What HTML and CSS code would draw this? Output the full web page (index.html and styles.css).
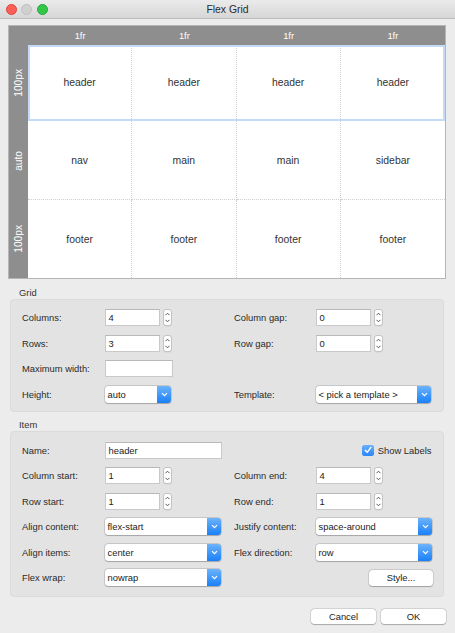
FILE: index.html
```html
<!DOCTYPE html>
<html>
<head>
<meta charset="utf-8">
<title>Flex Grid</title>
<link rel="stylesheet" href="styles.css">
</head>
<body>
<div class="window">
  <div class="titlebar">
    <div class="lights">
      <span class="light red"></span>
      <span class="light gray"></span>
      <span class="light green"></span>
    </div>
    <div class="title">Flex Grid</div>
    <div></div>
  </div>

  <div class="gridview">
    <div class="corner"></div>
    <div class="colhead">1fr</div>
    <div class="colhead">1fr</div>
    <div class="colhead">1fr</div>
    <div class="colhead">1fr</div>

    <div class="rowhead r1"><span>100px</span></div>
    <div class="cell y1 x1">header</div>
    <div class="cell y1 x2">header</div>
    <div class="cell y1 x3">header</div>
    <div class="cell y1 x4 lastc">header</div>

    <div class="rowhead r2"><span>auto</span></div>
    <div class="cell y2 x1">nav</div>
    <div class="cell y2 x2">main</div>
    <div class="cell y2 x3">main</div>
    <div class="cell y2 x4 lastc">sidebar</div>

    <div class="rowhead r3"><span>100px</span></div>
    <div class="cell y3 x1 lastr">footer</div>
    <div class="cell y3 x2 lastr">footer</div>
    <div class="cell y3 x3 lastr">footer</div>
    <div class="cell y3 x4 lastc lastr">footer</div>

    <div class="sel"></div>
  </div>

  <div class="sectlabel first">Grid</div>
  <div class="box gridbox">
    <div class="lbl">Columns:</div>
    <div class="field"><span class="input">4</span><span class="stepper"><svg width="7" height="15" viewBox="0 0 7 15"><path d="M1.5 5.2 L3.5 3.2 L5.5 5.2" fill="none" stroke="#555" stroke-width="1"/><path d="M1.5 9.8 L3.5 11.8 L5.5 9.8" fill="none" stroke="#555" stroke-width="1"/></svg></span></div>
    <div class="lbl">Column gap:</div>
    <div class="field"><span class="input">0</span><span class="stepper"><svg width="7" height="15" viewBox="0 0 7 15"><path d="M1.5 5.2 L3.5 3.2 L5.5 5.2" fill="none" stroke="#555" stroke-width="1"/><path d="M1.5 9.8 L3.5 11.8 L5.5 9.8" fill="none" stroke="#555" stroke-width="1"/></svg></span></div>

    <div class="lbl">Rows:</div>
    <div class="field"><span class="input">3</span><span class="stepper"><svg width="7" height="15" viewBox="0 0 7 15"><path d="M1.5 5.2 L3.5 3.2 L5.5 5.2" fill="none" stroke="#555" stroke-width="1"/><path d="M1.5 9.8 L3.5 11.8 L5.5 9.8" fill="none" stroke="#555" stroke-width="1"/></svg></span></div>
    <div class="lbl">Row gap:</div>
    <div class="field"><span class="input">0</span><span class="stepper"><svg width="7" height="15" viewBox="0 0 7 15"><path d="M1.5 5.2 L3.5 3.2 L5.5 5.2" fill="none" stroke="#555" stroke-width="1"/><path d="M1.5 9.8 L3.5 11.8 L5.5 9.8" fill="none" stroke="#555" stroke-width="1"/></svg></span></div>

    <div class="lbl">Maximum width:</div>
    <div class="field"><span class="input wide68"></span></div>
    <div></div>
    <div></div>

    <div class="lbl">Height:</div>
    <div class="popup w66"><span class="val">auto</span><span class="arrow"><svg width="7" height="5" viewBox="0 0 7 5"><path d="M1 1.2 L3.5 3.7 L6 1.2" fill="none" stroke="#fff" stroke-width="1.2"/></svg></span></div>
    <div class="lbl">Template:</div>
    <div class="popup w115"><span class="val">&lt; pick a template &gt;</span><span class="arrow"><svg width="7" height="5" viewBox="0 0 7 5"><path d="M1 1.2 L3.5 3.7 L6 1.2" fill="none" stroke="#fff" stroke-width="1.2"/></svg></span></div>
  </div>

  <div class="sectlabel">Item</div>
  <div class="box itembox">
    <div class="lbl">Name:</div>
    <div class="field"><span class="input wide117">header</span></div>
    <div class="check"><span class="cbox"><svg width="10" height="10" viewBox="0 0 10 10"><path d="M2.2 5.2 L4.2 7.3 L7.9 2.4" fill="none" stroke="#fff" stroke-width="1.4" stroke-linecap="round" stroke-linejoin="round"/></svg></span><span>Show Labels</span></div>

    <div class="lbl">Column start:</div>
    <div class="field"><span class="input">1</span><span class="stepper"><svg width="7" height="15" viewBox="0 0 7 15"><path d="M1.5 5.2 L3.5 3.2 L5.5 5.2" fill="none" stroke="#555" stroke-width="1"/><path d="M1.5 9.8 L3.5 11.8 L5.5 9.8" fill="none" stroke="#555" stroke-width="1"/></svg></span></div>
    <div class="lbl">Column end:</div>
    <div class="field"><span class="input">4</span><span class="stepper"><svg width="7" height="15" viewBox="0 0 7 15"><path d="M1.5 5.2 L3.5 3.2 L5.5 5.2" fill="none" stroke="#555" stroke-width="1"/><path d="M1.5 9.8 L3.5 11.8 L5.5 9.8" fill="none" stroke="#555" stroke-width="1"/></svg></span></div>

    <div class="lbl">Row start:</div>
    <div class="field"><span class="input">1</span><span class="stepper"><svg width="7" height="15" viewBox="0 0 7 15"><path d="M1.5 5.2 L3.5 3.2 L5.5 5.2" fill="none" stroke="#555" stroke-width="1"/><path d="M1.5 9.8 L3.5 11.8 L5.5 9.8" fill="none" stroke="#555" stroke-width="1"/></svg></span></div>
    <div class="lbl">Row end:</div>
    <div class="field"><span class="input">1</span><span class="stepper"><svg width="7" height="15" viewBox="0 0 7 15"><path d="M1.5 5.2 L3.5 3.2 L5.5 5.2" fill="none" stroke="#555" stroke-width="1"/><path d="M1.5 9.8 L3.5 11.8 L5.5 9.8" fill="none" stroke="#555" stroke-width="1"/></svg></span></div>

    <div class="lbl">Align content:</div>
    <div class="popup w116"><span class="val">flex-start</span><span class="arrow"><svg width="7" height="5" viewBox="0 0 7 5"><path d="M1 1.2 L3.5 3.7 L6 1.2" fill="none" stroke="#fff" stroke-width="1.2"/></svg></span></div>
    <div class="lbl">Justify content:</div>
    <div class="popup w116"><span class="val">space-around</span><span class="arrow"><svg width="7" height="5" viewBox="0 0 7 5"><path d="M1 1.2 L3.5 3.7 L6 1.2" fill="none" stroke="#fff" stroke-width="1.2"/></svg></span></div>

    <div class="lbl">Align items:</div>
    <div class="popup w116"><span class="val">center</span><span class="arrow"><svg width="7" height="5" viewBox="0 0 7 5"><path d="M1 1.2 L3.5 3.7 L6 1.2" fill="none" stroke="#fff" stroke-width="1.2"/></svg></span></div>
    <div class="lbl">Flex direction:</div>
    <div class="popup w116"><span class="val">row</span><span class="arrow"><svg width="7" height="5" viewBox="0 0 7 5"><path d="M1 1.2 L3.5 3.7 L6 1.2" fill="none" stroke="#fff" stroke-width="1.2"/></svg></span></div>

    <div class="lbl">Flex wrap:</div>
    <div class="popup w116"><span class="val">nowrap</span><span class="arrow"><svg width="7" height="5" viewBox="0 0 7 5"><path d="M1 1.2 L3.5 3.7 L6 1.2" fill="none" stroke="#fff" stroke-width="1.2"/></svg></span></div>
    <div></div>
    <div class="btn stylebtn">Style...</div>
  </div>

  <div class="actions">
    <div class="btn">Cancel</div>
    <div class="btn">OK</div>
  </div>
</div>
</body>
</html>
```

FILE: styles.css
```css
* { box-sizing: border-box; }

body {
  margin: 0;
  background: #ececec;
  font-family: "Liberation Sans", Arial, sans-serif;
  font-size: 9.4px;
  color: #2a2a2a;
}

.window {
  width: 455px;
  height: 633px;
  overflow: hidden;
}

.titlebar {
  height: 19px;
  background: linear-gradient(#ebebeb, #d6d6d6);
  border-bottom: 1px solid #bdbdbd;
  display: grid;
  grid-template-columns: 1fr auto 1fr;
  align-items: center;
}

.lights {
  display: flex;
  gap: 4.5px;
  padding-left: 5.5px;
}

.light {
  width: 11px;
  height: 11px;
  border-radius: 50%;
  display: block;
}
.light.red { background: #fc5f57; border: 0.5px solid #de443d; }
.light.gray { background: #d0d0d0; border: 0.5px solid #c0c0c0; }
.light.green { background: #33c748; border: 0.5px solid #21a936; }

.title {
  font-size: 10.4px;
  color: #2a2a2a;
}

.gridview {
  margin: 6px 0 0 8px;
  width: 438px;
  height: 254px;
  border: 1px solid #b5b5b5;
  background: #fff;
  display: grid;
  grid-template-columns: 19px repeat(4, 1fr);
  grid-template-rows: 19px 76px 79px 1fr;
}

.corner, .colhead, .rowhead {
  background: #8e8e8e;
  color: #fff;
  font-size: 9.4px;
}

.colhead, .rowhead {
  display: flex;
  align-items: center;
  justify-content: center;
}

.rowhead { font-size: 10.2px; }

.rowhead span {
  writing-mode: vertical-rl;
  transform: rotate(180deg);
}

.r1 { grid-row: 2; grid-column: 1; }
.r2 { grid-row: 3; grid-column: 1; }
.r3 { grid-row: 4; grid-column: 1; }

.y1 { grid-row: 2; }
.y2 { grid-row: 3; }
.y3 { grid-row: 4; }
.x1 { grid-column: 2; }
.x2 { grid-column: 3; }
.x3 { grid-column: 4; }
.x4 { grid-column: 5; }

.cell {
  display: flex;
  align-items: center;
  justify-content: center;
  font-size: 10.4px;
  color: #333;
  border-right: 1px dotted #cfcfcf;
  border-bottom: 1px dotted #cfcfcf;
}
.cell.lastc { border-right: none; }
.cell.lastr { border-bottom: none; }

.sel {
  grid-column: 2 / 6;
  grid-row: 2;
  border: 2px solid #c3dbf8;
  pointer-events: none;
}

.sectlabel {
  margin: 7px 0 0 19px;
  height: 12px;
  line-height: 12px;
  color: #333;
}
.sectlabel.first { margin-top: 8px; }

.box {
  margin-left: 10px;
  width: 434px;
  background: #e3e3e3;
  border: 1px solid #dbdbdb;
  border-radius: 4px;
  display: grid;
  grid-template-columns: 83px 129px 82px 1fr;
  grid-auto-rows: 17px;
  align-items: center;
  padding: 0 11px;
}

.gridbox {
  padding-top: 9px;
  padding-bottom: 8px;
  row-gap: 8.67px;
}

.itembox {
  padding-top: 10px;
  padding-bottom: 9.5px;
  row-gap: 8.5px;
}

.lbl {
  white-space: nowrap;
  color: #2a2a2a;
}

.field {
  display: flex;
  align-items: center;
  gap: 3px;
  height: 17px;
}

.input {
  width: 55px;
  height: 17px;
  background: #fff;
  border: 1px solid #c9c9c9;
  border-top-color: #b8b8b8;
  padding-left: 2.5px;
  line-height: 15px;
  color: #222;
  display: block;
}
.input.wide68 { width: 68px; }
.input.wide117 { width: 117px; }

.stepper {
  width: 9px;
  height: 17px;
  background: #fff;
  border: 1px solid #c3c3c3;
  border-radius: 3px;
  display: flex;
  align-items: center;
  justify-content: center;
  box-shadow: 0 0.5px 0.5px rgba(0,0,0,0.08);
}
.stepper svg { display: block; }

.popup {
  height: 17px;
  display: flex;
  background: #fff;
  border-radius: 3px;
  box-shadow: 0 0 0 0.5px rgba(0,0,0,0.22), 0 0.5px 1px rgba(0,0,0,0.18);
}
.popup.w66 { width: 66px; }
.popup.w115 { width: 115px; }
.popup.w116 { width: 116px; }

.popup .val {
  flex: 1;
  padding-left: 2.5px;
  line-height: 17px;
  color: #222;
  white-space: nowrap;
  overflow: hidden;
}

.popup .arrow {
  width: 14px;
  background: linear-gradient(#6cb3fb, #1a80f8);
  border-radius: 0 3px 3px 0;
  display: flex;
  align-items: center;
  justify-content: center;
}
.popup .arrow svg { display: block; }

.check {
  grid-column: 3 / 5;
  justify-self: end;
  display: flex;
  align-items: center;
  gap: 4px;
  padding-right: 0.5px;
}

.cbox {
  width: 11.5px;
  height: 11.5px;
  border-radius: 2.5px;
  background: linear-gradient(#69b0fa, #2a86f7);
  display: flex;
  align-items: center;
  justify-content: center;
}
.cbox svg { display: block; }

.btn {
  height: 15.5px;
  background: #fff;
  border-radius: 3.5px;
  box-shadow: 0 0 0 0.5px rgba(0,0,0,0.18), 0 0.5px 1px rgba(0,0,0,0.22);
  display: flex;
  align-items: center;
  justify-content: center;
  color: #222;
  font-size: 9.4px;
}

.stylebtn {
  width: 64px;
  justify-self: end;
  margin-right: -1px;
}

.actions {
  margin-top: 12px;
  display: flex;
  justify-content: flex-end;
  gap: 5px;
  padding-right: 9px;
}
.actions .btn { width: 65px; }
```
